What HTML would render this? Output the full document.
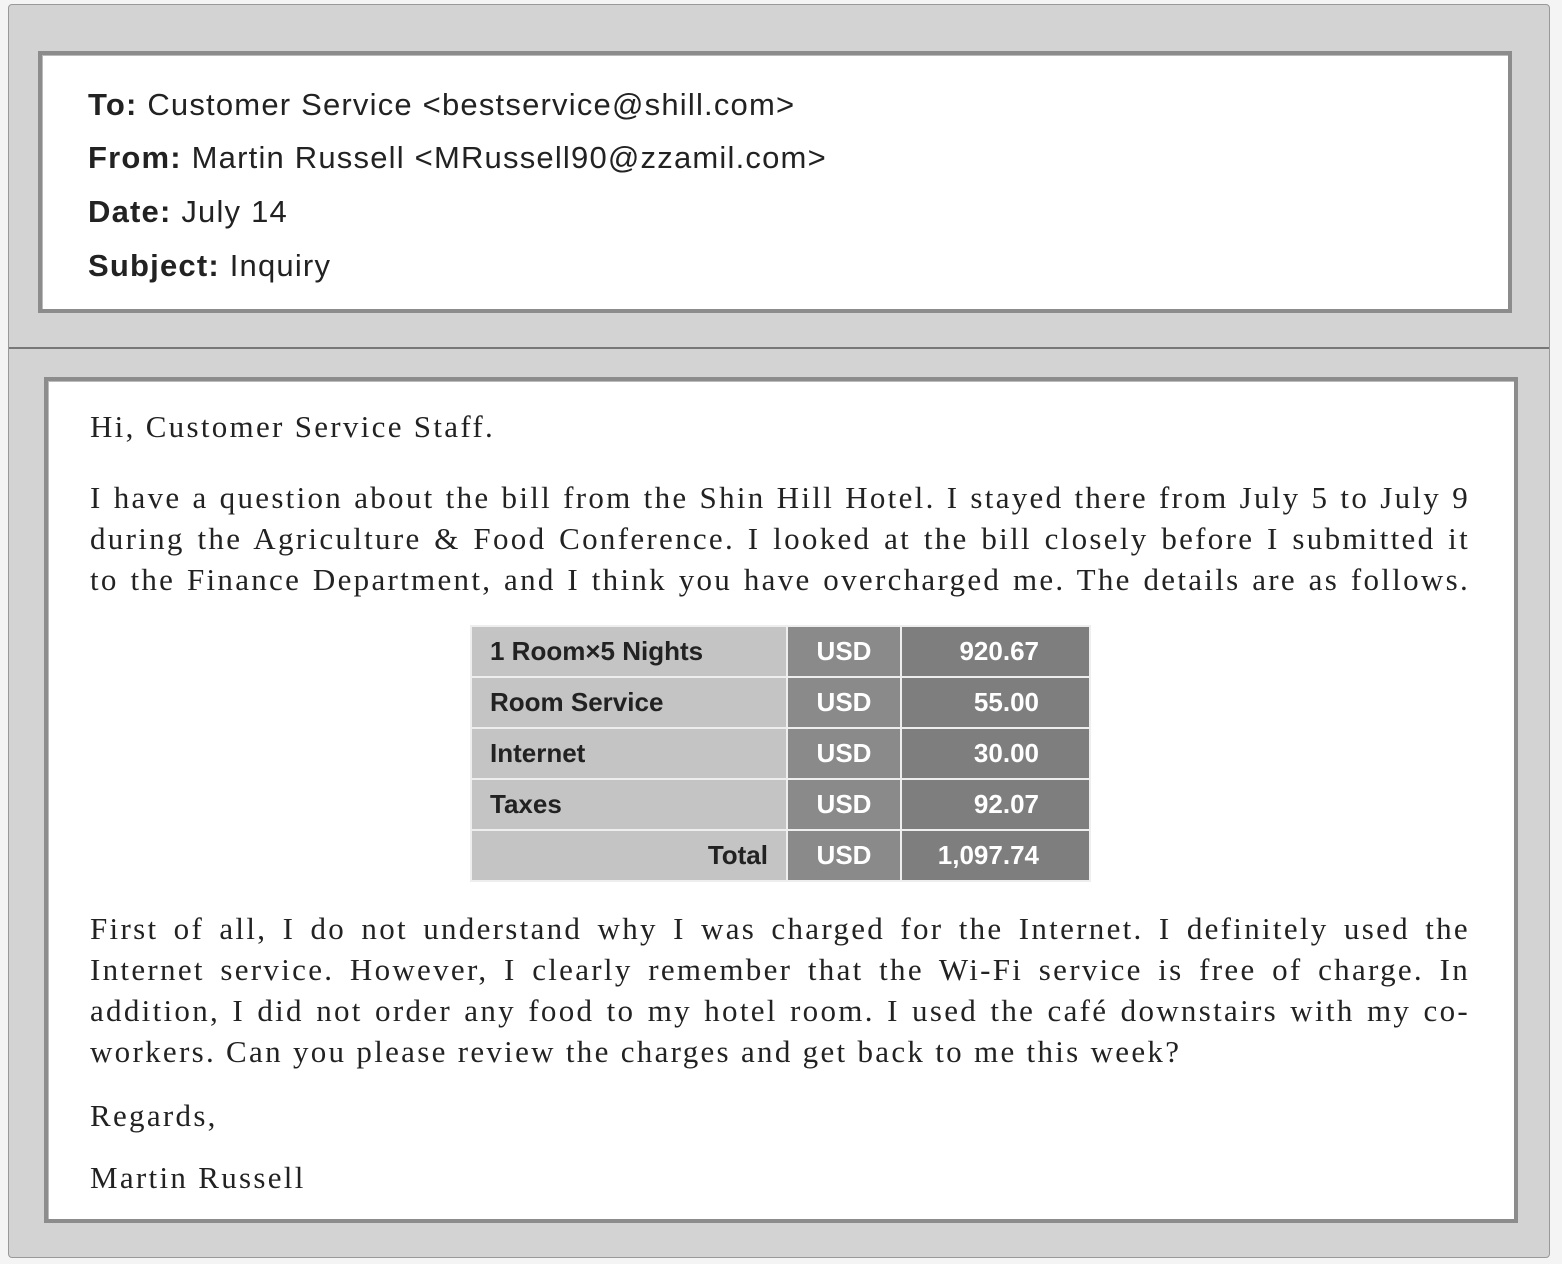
<!DOCTYPE html><html><head><style>
body{margin:0;width:1562px;height:1264px;background:#f4f4f4;position:relative;overflow:hidden}
.outer{position:absolute;left:8px;top:4px;width:1540px;height:1252px;background:#d3d3d3;border:1px solid #999;border-radius:4px}
.div{position:absolute;left:9px;top:347px;width:1540px;height:2px;background:#777}
.box{position:absolute;background:#fff;border:4px solid #8c8c8c;box-shadow:inset 1px 1px 0 #bbb}
.hd{font-family:"Liberation Sans",sans-serif;font-size:31px;letter-spacing:1.2px;color:#222;position:absolute;left:88px;line-height:36px}
.hd b{font-weight:bold}
.p{position:absolute;left:90px;width:1380px;font-family:"Liberation Serif",serif;font-size:31px;letter-spacing:2.3px;color:#222;text-align:justify}
.ln{display:block;height:41px;line-height:41px;text-align:justify;text-align-last:justify}
.last{text-align-last:left}
table{position:absolute;left:470px;top:625px;width:621px;height:254px;border-collapse:collapse;table-layout:fixed;border:2px solid #444;font-family:"Liberation Sans",sans-serif;font-size:26px;font-weight:bold}
td{border:2px solid #eee;padding:0 18px;height:49px}
td.a{background:#c4c4c4;color:#222;width:280px}
td.b{background:#8a8a8a;color:#fff;text-align:center;width:112px;padding:0}
td.c{background:#7e7e7e;color:#fff;text-align:right;padding-right:50px}
</style></head><body>
<div class="outer"></div>
<div class="div"></div>
<div class="box" style="left:38px;top:51px;width:1466px;height:254px"></div>
<div class="hd" style="top:87px"><b>To:</b> Customer Service &lt;bestservice@shill.com&gt;</div>
<div class="hd" style="top:140px"><b>From:</b> Martin Russell &lt;MRussell90@zzamil.com&gt;</div>
<div class="hd" style="top:194px"><b>Date:</b> July 14</div>
<div class="hd" style="top:248px"><b>Subject:</b> Inquiry</div>
<div class="box" style="left:44px;top:377px;width:1466px;height:838px"></div>
<div class="p" style="top:406px"><span class="ln last">Hi, Customer Service Staff.</span></div>
<div class="p" style="top:477px">
<span class="ln">I have a question about the bill from the Shin Hill Hotel. I stayed there from July 5 to July 9</span>
<span class="ln">during the Agriculture &amp; Food Conference. I looked at the bill closely before I submitted it</span>
<span class="ln">to the Finance Department, and I think you have overcharged me. The details are as follows.</span></div>
<table>
<colgroup><col style="width:316px"><col style="width:114px"><col></colgroup>
<tr><td class="a">1 Room×5 Nights</td><td class="b">USD</td><td class="c">920.67</td></tr>
<tr><td class="a">Room Service</td><td class="b">USD</td><td class="c">55.00</td></tr>
<tr><td class="a">Internet</td><td class="b">USD</td><td class="c">30.00</td></tr>
<tr><td class="a">Taxes</td><td class="b">USD</td><td class="c">92.07</td></tr>
<tr><td class="a" style="text-align:right">Total</td><td class="b">USD</td><td class="c">1,097.74</td></tr>
</table>
<div class="p" style="top:908px">
<span class="ln">First of all, I do not understand why I was charged for the Internet. I definitely used the</span>
<span class="ln">Internet service. However, I clearly remember that the Wi-Fi service is free of charge. In</span>
<span class="ln">addition, I did not order any food to my hotel room. I used the café downstairs with my co-</span>
<span class="ln last">workers. Can you please review the charges and get back to me this week?</span></div>
<div class="p" style="top:1095px"><span class="ln last">Regards,</span></div>
<div class="p" style="top:1157px"><span class="ln last">Martin Russell</span></div>
</body></html>
